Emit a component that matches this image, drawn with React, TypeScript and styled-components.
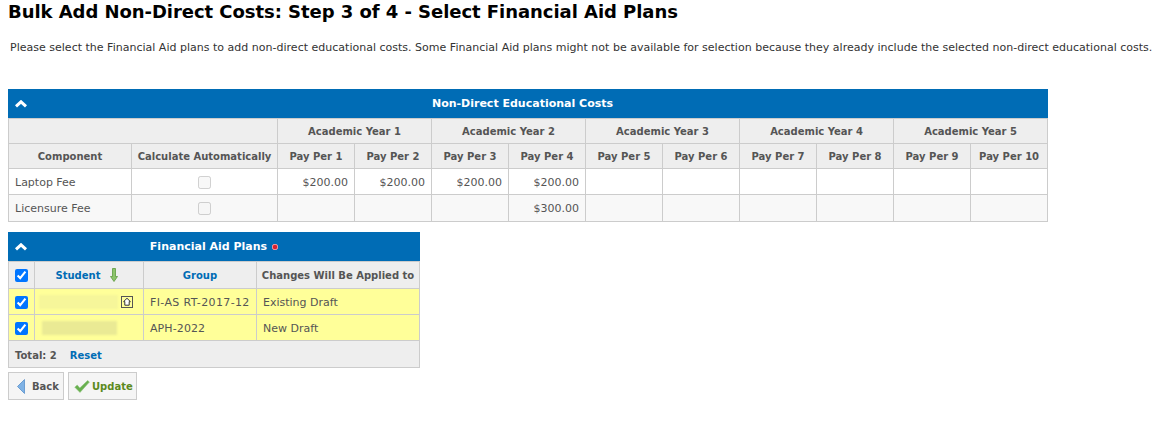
import React from "react";
import styled, { createGlobalStyle } from "styled-components";

const GlobalStyle = createGlobalStyle`
  body {
    margin: 0;
    background: #fff;
    font-family: "DejaVu Sans", Verdana, sans-serif;
    font-size: 11px;
    color: #555;
  }
`;

const Page = styled.div`
  width: 1165px;
  height: 424px;
  overflow: hidden;
  padding: 0 0 0 8px;
  box-sizing: border-box;
`;

const Title = styled.h1`
  margin: 0;
  padding-top: 1px;
  font-size: 18px;
  letter-spacing: -0.05px;
  line-height: 21px;
  font-weight: bold;
  color: #000;
  white-space: nowrap;
`;

const Intro = styled.p`
  margin: 18px 0 0 2px;
  font-size: 11px;
  letter-spacing: 0.01px;
  line-height: 16px;
  color: #333;
  white-space: nowrap;
`;

const Panel = styled.section<{ $width: number; $top: number }>`
  width: ${(p) => p.$width}px;
  margin-top: ${(p) => p.$top}px;
`;

const PanelHeader = styled.div<{ $shift?: number }>`
  position: relative;
  height: 29px;
  padding-right: ${(p) => p.$shift ?? 0}px;
  background: #006cb5;
  color: #fff;
  font-size: 11px;
  font-weight: bold;
  display: flex;
  align-items: center;
  justify-content: center;
  gap: 5px;
`;

const Collapse = styled.svg`
  position: absolute;
  left: 7px;
  top: 11px;
`;

const Grid = styled.table`
  width: 100%;
  table-layout: fixed;
  border-collapse: collapse;
  border: 1px solid #ccc;
  border-top: 0;
`;

const Col = styled.col<{ $width: number }>`
  width: ${(p) => p.$width}px;
`;

const Th = styled.th<{ $height?: number }>`
  height: ${(p) => p.$height ?? 24}px;
  padding: 0;
  background: #eee;
  border: 1px solid #ccc;
  font-size: 10px;
  font-weight: bold;
  color: #555;
  text-align: center;
  white-space: nowrap;
`;

const LinkTh = styled(Th)`
  color: #006cb5;
`;

const Row = styled.tr<{ $tone: "white" | "soft" | "yellow" }>`
  background: ${(p) =>
    p.$tone === "yellow" ? "#ffff99" : p.$tone === "soft" ? "#f8f8f8" : "#fff"};
`;

const Td = styled.td<{ $height?: number; $align?: string; $spacing?: number }>`
  height: ${(p) => p.$height ?? 24}px;
  padding: 1px 6px 0;
  border: 1px solid #ccc;
  font-size: 11px;
  letter-spacing: ${(p) => p.$spacing ?? 0}px;
  color: #555;
  text-align: ${(p) => p.$align ?? "left"};
  white-space: nowrap;
`;

const CheckCell = styled(Td)`
  padding: 1px 0 0;
  text-align: center;
`;

const Check = styled.input`
  display: block;
  margin: 0 auto;
  width: 13px;
  height: 13px;
  accent-color: #0075ff;
`;

const StudentCell = styled.div`
  position: relative;
  height: 14px;
`;

const Blur = styled.div<{ $left: number; $width: number; $color: string }>`
  position: absolute;
  top: 0;
  left: ${(p) => p.$left}px;
  width: ${(p) => p.$width}px;
  height: 14px;
  background: ${(p) => p.$color};
  filter: blur(1px);
`;

const HomeIcon = styled.svg`
  position: absolute;
  right: 4px;
  top: 1px;
`;

const SortCell = styled.span`
  display: inline-flex;
  align-items: center;
  gap: 10px;
  padding-right: 4px;
`;

const Footer = styled.div`
  height: 24px;
  padding: 2px 0 0 6px;
  display: flex;
  align-items: center;
  gap: 13px;
  background: #eee;
  border: 1px solid #ccc;
  border-top: 0;
  font-size: 10px;
  font-weight: bold;
`;

const FooterLink = styled.a`
  color: #006cb5;
`;

const Actions = styled.div`
  display: flex;
  gap: 4px;
  margin-top: 4px;
`;

const Action = styled.button<{ $color: string; $width: number; $gap: number }>`
  width: ${(p) => p.$width}px;
  height: 28px;
  padding: 0 0 0 5px;
  display: flex;
  align-items: center;
  gap: ${(p) => p.$gap}px;
  background: #f5f5f5;
  border: 1px solid #ccc;
  font-family: inherit;
  font-size: 10px;
  font-weight: bold;
  color: ${(p) => p.$color};
`;

const BackIcon = styled.svg`
  margin-left: 3px;
`;

const years = [1, 2, 3, 4, 5];
const periods = [1, 2, 3, 4, 5, 6, 7, 8, 9, 10];

const costs = [
  { name: "Laptop Fee", tone: "white" as const, height: 24, amounts: { 1: "$200.00", 2: "$200.00", 3: "$200.00", 4: "$200.00" } as Record<number, string> },
  { name: "Licensure Fee", tone: "soft" as const, height: 25, amounts: { 4: "$300.00" } as Record<number, string> },
];

const plans = [
  { group: "FI-AS RT-2017-12", spacing: 0.37, target: "Existing Draft", home: true, blurLeft: -2, blurWidth: 79, blurColor: "#f6f69a" },
  { group: "APH-2022", spacing: 0.1, target: "New Draft", home: false, blurLeft: 1, blurWidth: 75, blurColor: "#eaea94" },
];

const Chevron = () => (
  <Collapse width="12" height="8" viewBox="0 0 12 8">
    <path d="M1 6.4 6 1.8l5 4.6" fill="none" stroke="#fff" strokeWidth="3" />
  </Collapse>
);

export default function App() {
  return (
    <Page>
      <GlobalStyle />
      <Title>Bulk Add Non-Direct Costs: Step 3 of 4 - Select Financial Aid Plans</Title>
      <Intro>
        Please select the Financial Aid plans to add non-direct educational costs. Some Financial
        Aid plans might not be available for selection because they already include the selected
        non-direct educational costs.
      </Intro>

      <Panel $width={1040} $top={33}>
        <PanelHeader $shift={11}>
          <Chevron />
          Non-Direct Educational Costs
        </PanelHeader>
        <Grid>
          <colgroup>
            <Col $width={123} />
            <Col $width={146} />
            {periods.map((p) => (
              <Col key={p} $width={77} />
            ))}
          </colgroup>
          <thead>
            <tr>
              <Th colSpan={2} />
              {years.map((y) => (
                <Th key={y} colSpan={2}>
                  Academic Year {y}
                </Th>
              ))}
            </tr>
            <tr>
              <Th>Component</Th>
              <Th>Calculate Automatically</Th>
              {periods.map((p) => (
                <Th key={p}>Pay Per {p}</Th>
              ))}
            </tr>
          </thead>
          <tbody>
            {costs.map((c) => (
              <Row key={c.name} $tone={c.tone}>
                <Td $height={c.height}>{c.name}</Td>
                <CheckCell $height={c.height}>
                  <Check type="checkbox" disabled />
                </CheckCell>
                {periods.map((p) => (
                  <Td key={p} $height={c.height} $align="right">
                    {c.amounts[p]}
                  </Td>
                ))}
              </Row>
            ))}
          </tbody>
        </Grid>
      </Panel>

      <Panel $width={412} $top={10}>
        <PanelHeader>
          <Chevron />
          Financial Aid Plans
          <svg width="6" height="6" viewBox="0 0 6 6">
            <rect x="0.5" y="0.5" width="5" height="5" rx="1.6" fill="#d9202e" stroke="#f59aa2" strokeWidth="1" />
          </svg>
        </PanelHeader>
        <Grid>
          <colgroup>
            <Col $width={26} />
            <Col $width={109} />
            <Col $width={113} />
            <Col $width={163} />
          </colgroup>
          <thead>
            <tr>
              <Th $height={26}>
                <Check type="checkbox" defaultChecked />
              </Th>
              <LinkTh $height={26}>
                <SortCell>
                  Student
                  <svg width="8" height="14" viewBox="0 0 8 14">
                    <path d="M2.5 0.5h3v8h2L4 13.5 0.5 8.5h2z" fill="#8cc46a" stroke="#5c9a3e" strokeWidth="0.8" />
                  </svg>
                </SortCell>
              </LinkTh>
              <LinkTh $height={26}>Group</LinkTh>
              <Th $height={26}>Changes Will Be Applied to</Th>
            </tr>
          </thead>
          <tbody>
            {plans.map((p) => (
              <Row key={p.group} $tone="yellow">
                <CheckCell>
                  <Check type="checkbox" defaultChecked />
                </CheckCell>
                <Td>
                  <StudentCell>
                    <Blur $left={p.blurLeft} $width={p.blurWidth} $color={p.blurColor} />
                    {p.home && (
                      <HomeIcon width="12" height="12" viewBox="0 0 12 12">
                        <rect x="0.5" y="0.5" width="11" height="11" fill="none" stroke="#555" />
                        <path d="M6 2.3 2.6 5.6h1.2v3.6h4.4V5.6h1.2z" fill="#fff" stroke="#333" />
                      </HomeIcon>
                    )}
                  </StudentCell>
                </Td>
                <Td $spacing={p.spacing}>{p.group}</Td>
                <Td>{p.target}</Td>
              </Row>
            ))}
          </tbody>
        </Grid>
        <Footer>
          <span>Total: 2</span>
          <FooterLink>Reset</FooterLink>
        </Footer>
      </Panel>

      <Actions>
        <Action $color="#555" $width={56} $gap={7}>
          <BackIcon width="8" height="15" viewBox="0 0 8 15">
            <path d="M7.5 0.5v14L0.5 7.5z" fill="#7fb2e5" stroke="#4a86c5" strokeWidth="0.7" />
          </BackIcon>
          Back
        </Action>
        <Action $color="#5c8a1e" $width={69} $gap={2}>
          <svg width="16" height="13" viewBox="0 0 16 13">
            <path d="M0.8 7.2 3.2 5l2.6 3L13.6 0.6 15.4 2l-9.4 10.4z" fill="#68b04f" stroke="#8fc47d" strokeWidth="0.6" />
          </svg>
          Update
        </Action>
      </Actions>
    </Page>
  );
}
